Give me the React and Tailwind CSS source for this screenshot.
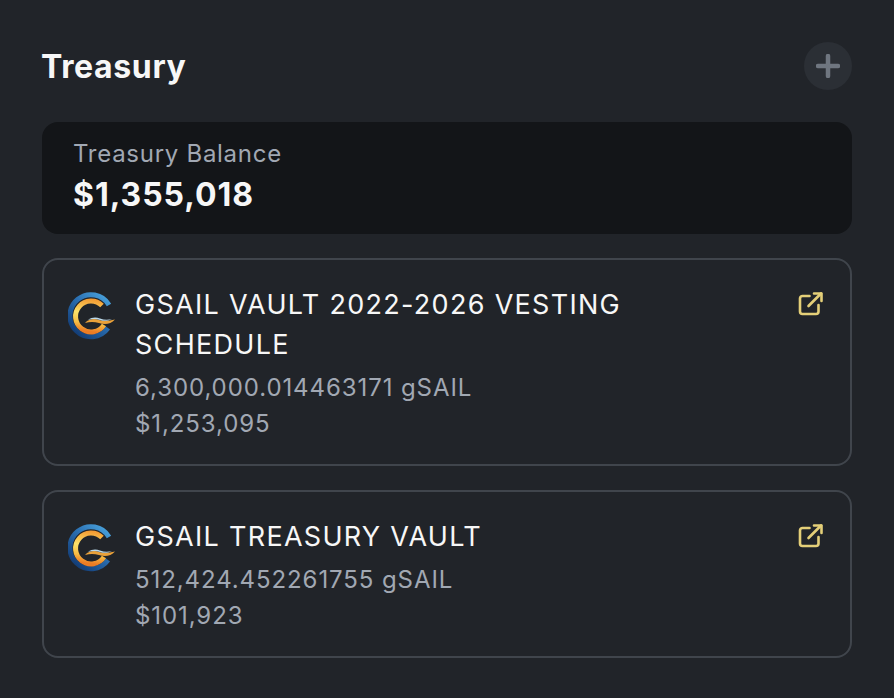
import React from "react";

function Logo({ id }) {
  return (
    <svg width="48" height="48" viewBox="0 0 48 48" className="shrink-0" fill="none">
      <defs>
        <linearGradient id={`o${id}`} gradientUnits="userSpaceOnUse" x1="42" y1="6" x2="8" y2="44">
          <stop offset="0" stopColor="#4aa3dc" />
          <stop offset="0.45" stopColor="#2a6fb2" />
          <stop offset="1" stopColor="#123a72" />
        </linearGradient>
        <linearGradient id={`i${id}`} gradientUnits="userSpaceOnUse" x1="30" y1="8" x2="26" y2="40">
          <stop offset="0" stopColor="#f39a32" />
          <stop offset="0.45" stopColor="#fbe26a" />
          <stop offset="0.75" stopColor="#f6bd45" />
          <stop offset="1" stopColor="#ec7c24" />
        </linearGradient>
      </defs>
      <path d="M41 13 A21 21 0 1 0 40 36" stroke={`url(#o${id})`} strokeWidth="5" />
      <path d="M34 13.500 A15.500 15.500 0 1 0 36 33" stroke={`url(#i${id})`} strokeWidth="5" />
      <path d="M17 31 C21 26.500 27 26.500 31 28 C36 29.500 41 29 47 27.500 C43 32.500 36 33 31 31 C26 29.500 22 29.500 17 31 Z" fill="#e9a13a" />
      <path d="M20 28 C24 25 28 25 32 26.500 C36 28 40 28 44 27 C40 29 36 29.500 32 28 C28 26.500 24 26.500 20 28 Z" fill="#bcd9ea" />
    </svg>
  );
}

function ExternalIcon() {
  return (
    <svg width="26" height="26" viewBox="0 0 26 26" fill="none" stroke="#e4cf78" strokeWidth="2.600" strokeLinecap="round" strokeLinejoin="round" className="shrink-0">
      <path d="M11.500 5 H4.500 A2.500 2.500 0 0 0 2 7.500 V20.500 A2.500 2.500 0 0 0 4.500 23 H18 A2.500 2.500 0 0 0 20.500 20.500 V14" />
      <path d="M10.500 15 L23 2.500" />
      <path d="M16 2.500 H23.500 V10" />
    </svg>
  );
}

function Vault({ id, title, amount, usd }) {
  return (
    <div className="flex items-start rounded-2xl border-2 border-[#40454c] pl-[24px] pr-[26px] pt-[25px] pb-[22px]">
      <div className="pt-[7px]"><Logo id={id} /></div>
      <div className="ml-[19px] flex-1">
        <div className="text-[27px] leading-[40px] tracking-[0.048em] text-[#f7f7f7] max-w-[520px]">{title}</div>
        <div className="mt-[5px] text-[24px] leading-[36px] tracking-[0.038em] text-[#a1a8b3]">{amount}</div>
        <div className="text-[24px] leading-[36px] tracking-[0.038em] text-[#a1a8b3]">{usd}</div>
      </div>
      <div className="pt-[6px]"><ExternalIcon /></div>
    </div>
  );
}

export default function App() {
  return (
    <div className="w-[894px] h-[698px] overflow-hidden bg-[#212429] px-[42px] pt-[42px] font-['Inter',sans-serif]">
      <div className="flex items-center justify-between h-[48px]">
        <div className="-ml-px pt-[2px] text-[32px] font-bold tracking-[0.02em] text-[#f7f7f7]">Treasury</div>
        <div className="flex h-[48px] w-[48px] items-center justify-center rounded-full bg-[#2b2f35]">
          <svg width="24" height="24" viewBox="0 0 24 24" fill="none" stroke="#6f7680" strokeWidth="4.500" strokeLinecap="round">
            <path d="M12 2 V22 M2 12 H22" />
          </svg>
        </div>
      </div>
      <div className="mt-[32px] h-[112px] rounded-2xl bg-[#131518] px-[31px] pt-[14px]">
        <div className="text-[24px] leading-[36px] tracking-[0.03em] text-[#a1a8b3]">Treasury Balance</div>
        <div className="text-[32px] leading-[46px] font-bold tracking-[0.03em] text-[#f7f7f7]">$1,355,018</div>
      </div>
      <div className="mt-[24px] flex flex-col gap-[24px]">
        <Vault id="a" title="GSAIL VAULT 2022-2026 VESTING SCHEDULE" amount="6,300,000.014463171 gSAIL" usd="$1,253,095" />
        <Vault id="b" title="GSAIL TREASURY VAULT" amount="512,424.452261755 gSAIL" usd="$101,923" />
      </div>
    </div>
  );
}
